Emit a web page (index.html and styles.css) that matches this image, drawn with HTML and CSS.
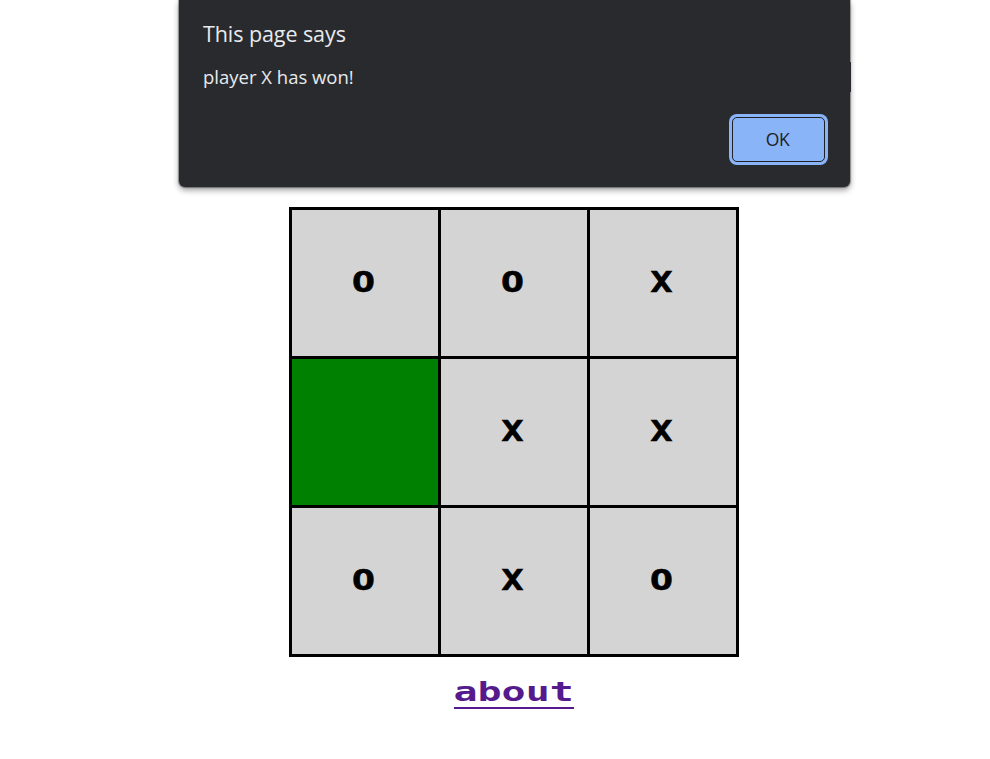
FILE: index.html
```html
<!DOCTYPE html>
<html lang="en">
<head>
<meta charset="utf-8">
<title>Tic Tac Toe</title>
<link rel="stylesheet" href="styles.css">
</head>
<body>
<main class="game">
  <div class="board">
    <div class="cell"><span class="mark">O</span></div>
    <div class="cell"><span class="mark">O</span></div>
    <div class="cell"><span class="mark cross">X</span></div>
    <div class="cell active"></div>
    <div class="cell"><span class="mark cross">X</span></div>
    <div class="cell"><span class="mark cross">X</span></div>
    <div class="cell"><span class="mark">O</span></div>
    <div class="cell"><span class="mark cross">X</span></div>
    <div class="cell"><span class="mark">O</span></div>
  </div>
  <a class="about" href="#"><span class="about-text">about</span></a>
</main>
<div class="dialog" role="alertdialog">
  <h1 class="title">This page says</h1>
  <p class="message">player X has won!</p>
  <button class="ok">OK</button>
</div>
</body>
</html>
```
FILE: styles.css
```css
* { box-sizing: border-box; }
body {
  margin: 0;
  height: 759px;
  overflow: hidden;
  background: #fff;
}
.game {
  display: flex;
  flex-direction: column;
  align-items: center;
  width: 1028px;
  padding-top: 207px;
}
.board {
  display: grid;
  grid-template-columns: repeat(3, 146px);
  grid-template-rows: repeat(3, 146px);
  gap: 3px;
  padding: 3px;
  background: #000;
}
.cell {
  display: flex;
  align-items: center;
  justify-content: center;
  background: #d4d4d4;
}
.active { background: green; }
.mark {
  font: bold 28px/28px "DejaVu Sans Mono", monospace;
  -webkit-text-stroke: .6px #000;
  transform: translate(-2px, 0) scaleX(1.36);
}
.cross { transform: translate(-2px, 0) scaleX(1.3); }
.about {
  display: flex;
  justify-content: center;
  width: 120px;
  height: 32px;
  margin-top: 20px;
  border-bottom: 2px solid #551a8b;
  color: #551a8b;
  text-decoration: none;
}
.about-text {
  font: bold 27px/30px "DejaVu Sans Mono", monospace;
  transform: scaleX(1.48);
}
.dialog {
  position: absolute;
  top: 0;
  left: 179px;
  display: flex;
  flex-direction: column;
  width: 671px;
  height: 187px;
  padding: 19px 25px 0 24px;
  border-radius: 0 0 6px 6px;
  background: #292a2d;
  color: #e8eaed;
  font-family: "Open Sans", "Noto Sans", sans-serif;
  box-shadow: 0 0 1px 1px rgba(0, 0, 0, .35), 0 3px 6px rgba(0, 0, 0, .4);
}
.dialog::after {
  content: "";
  position: absolute;
  top: 62px;
  right: -1px;
  width: 1px;
  height: 30px;
  background: #292a2d;
}
.title {
  margin: 0;
  font-size: 21.5px;
  font-weight: 400;
  line-height: 30px;
  letter-spacing: -.08px;
  white-space: nowrap;
}
.message {
  margin: 14px 0 0;
  font-size: 18.5px;
  line-height: 28px;
}
.ok {
  align-self: flex-end;
  width: 93px;
  height: 45px;
  margin-top: 26px;
  padding: 0 2px 2px 0;
  border: 1px solid #202124;
  border-radius: 5px;
  background: #8ab4f8;
  box-shadow: 0 0 0 3px #8ab4f8;
  color: #202124;
  font: 17.5px/24px "Open Sans", "Noto Sans", sans-serif;
  letter-spacing: -.3px;
}
```
